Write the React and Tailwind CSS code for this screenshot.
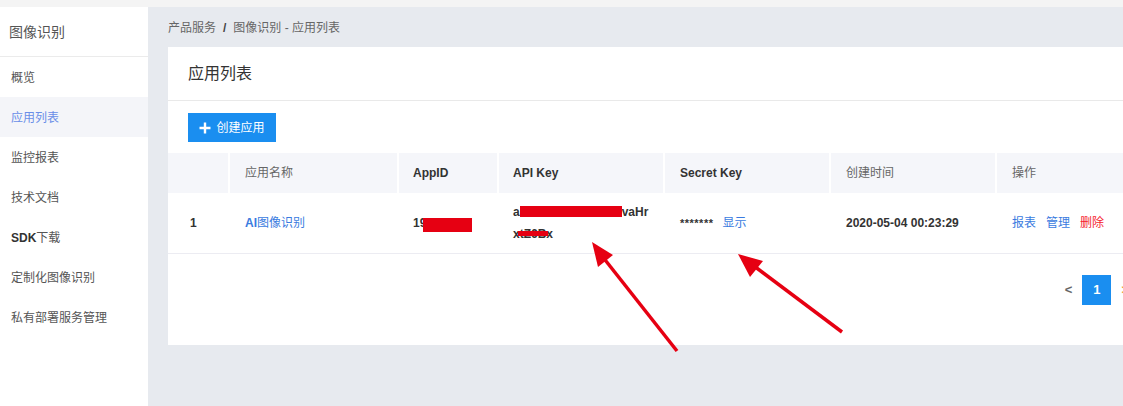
import React from 'react';

const font = "font-['Liberation_Sans','Noto_Sans_CJK_SC',sans-serif]";

const navItems = [
  { label: '概览' },
  { label: '应用列表', active: true },
  { label: '监控报表' },
  { label: '技术文档' },
  { label: 'SDK下载', sdk: true },
  { label: '定制化图像识别' },
  { label: '私有部署服务管理' },
];

const cols = 'grid grid-cols-[60px_169px_100px_166px_166px_166px_1fr]';

const Sidebar = () => (
  <aside className="w-[148px] shrink-0 bg-white">
    <div className="h-[50px] flex items-center pl-[9px] pt-[1px] border-b border-[#ebebeb] text-[14px] text-[#555]">
      图像识别
    </div>
    <nav>
      {navItems.map((item) => (
        <div
          key={item.label}
          className={`h-[40px] flex items-center pl-[11px] pt-[1px] text-[12px] ${
            item.active ? 'bg-[#f4f5f9] text-[#6a8ee8]' : 'text-[#555]'
          }`}
        >
          {item.sdk ? (
            <>
              <span className="font-bold text-[#333]">SDK</span>下载
            </>
          ) : (
            item.label
          )}
        </div>
      ))}
    </nav>
  </aside>
);

const Redact = ({ className }) => <span className={`inline-block bg-[#e60012] ${className}`} />;

const AppTable = () => (
  <div className="mt-[11px] text-[12px]">
    {/* header */}
    <div className={`${cols} h-[40px] bg-[#f5f6fa] items-stretch`}>
      <div />
      <div className="border-l-2 border-white flex items-center pl-[15px] text-[#666]">应用名称</div>
      <div className="border-l-2 border-white flex items-center pl-[14px] font-bold text-[#333]">AppID</div>
      <div className="border-l-2 border-white flex items-center pl-[14px] font-bold text-[#333]">API Key</div>
      <div className="border-l-2 border-white flex items-center pl-[15px] font-bold text-[#333]">Secret Key</div>
      <div className="border-l-2 border-white flex items-center pl-[15px] text-[#666]">创建时间</div>
      <div className="border-l-2 border-white flex items-center pl-[15px] text-[#666]">操作</div>
    </div>
    {/* row */}
    <div className={`${cols} h-[61px] items-center border-b border-[#ececf2]`}>
      <div className="pl-[22px] font-bold text-[#333]">1</div>
      <div className="pl-[17px] text-[#3a7be0]">
        <span className="font-bold">AI</span>图像识别
      </div>
      <div className="pl-[16px] font-bold text-[#333] flex items-center">
        19
        <Redact className="w-[49px] h-[14px] mt-[4px] -ml-[3px]" />
      </div>
      <div className="pl-[16px] font-bold text-[#333] leading-[22px]">
        <div className="flex items-center">
          a
          <Redact className="w-[102px] h-[11px] -mt-[1px]" />
          vaHr
        </div>
        <div className="relative inline-block">
          xtZ6Bx
          <Redact className="absolute left-[5px] top-[8px] w-[30px] h-[5px]" />
        </div>
      </div>
      <div className="pl-[17px] flex items-center gap-[9px]">
        <span className="font-bold text-[#333] text-[11px] tracking-[0.5px]">*******</span>
        <span className="text-[#3a7be0]">显示</span>
      </div>
      <div className="pl-[17px] font-bold text-[#333]">2020-05-04 00:23:29</div>
      <div className="pl-[17px] flex gap-[10px]">
        <span className="text-[#3a7be0]">报表</span>
        <span className="text-[#3a7be0]">管理</span>
        <span className="text-[#f5222d]">删除</span>
      </div>
    </div>
  </div>
);

const Arrows = () => (
  <svg className="absolute inset-0 pointer-events-none" width="1123" height="406">
    <line x1="677" y1="351" x2="602" y2="256" stroke="#e60012" strokeWidth="3.5" />
    <polygon points="592,242 613,255 598,267" fill="#e60012" />
    <line x1="842" y1="332" x2="750" y2="263" stroke="#e60012" strokeWidth="3.5" />
    <polygon points="738,254 763,261 750,277" fill="#e60012" />
  </svg>
);

export default function App() {
  return (
    <div className={`relative w-[1123px] h-[406px] overflow-hidden flex flex-col ${font}`}>
      <div className="h-[7px] bg-[#f4f4f4] shrink-0" />
      <div className="flex flex-1 min-h-0">
        <Sidebar />
        <main className="flex-1 bg-[#e7eaef] pl-[20px] overflow-hidden">
          <div className="h-[40px] flex items-center pt-[1px] text-[12px] text-[#666]">
            产品服务<span className="mx-[7px] font-bold text-[#444]">/</span>图像识别 - 应用列表
          </div>
          <div className="w-[1000px] bg-white">
            <div className="h-[54px] flex items-center pl-[20px] border-b border-[#e9e9e9] text-[16px] text-[#333]">
              应用列表
            </div>
            <div className="pl-[20px] pt-[12px]">
              <button className="h-[29px] w-[88px] bg-[#1a8ef0] text-white text-[12px] flex items-center justify-center gap-[5px]">
                <svg width="12" height="12" viewBox="0 0 12 12">
                  <path d="M6 0.5v11M0.5 6h11" stroke="white" strokeWidth="2.4" />
                </svg>
                创建应用
              </button>
            </div>
            <AppTable />
            <div className="flex justify-end items-center pt-[21px] pb-[40px] pr-[39px] text-[13px]">
              <span className="text-[#666] font-bold">&lt;</span>
              <span className="ml-[10px] w-[29px] h-[30px] bg-[#1a8ef0] text-white font-bold flex items-center justify-center">
                1
              </span>
              <span className="ml-[10px] text-[#f0a040] font-bold">&gt;</span>
            </div>
          </div>
        </main>
      </div>
      <Arrows />
    </div>
  );
}
